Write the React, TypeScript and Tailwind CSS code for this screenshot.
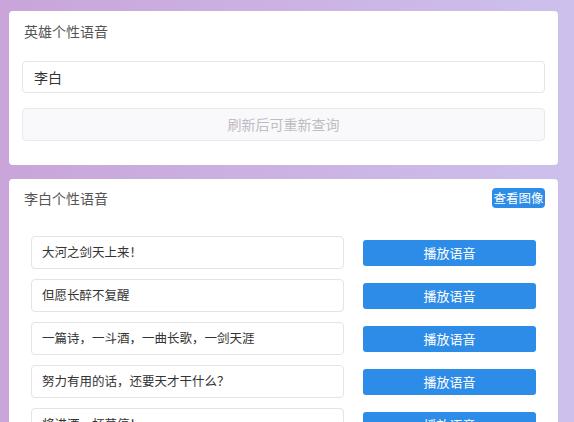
const lines = [
  "大河之剑天上来！",
  "但愿长醉不复醒",
  "一篇诗，一斗酒，一曲长歌，一剑天涯",
  "努力有用的话，还要天才干什么？",
  "将进酒，杯莫停！",
];

export default function App() {
  return (
    <div
      className="h-[422px] w-[574px] overflow-hidden bg-gradient-to-r from-[#c9a5d9] to-[#cdc0ec] pl-[9px] pr-[16px] pt-[11px]"
      style={{ fontFamily: '"Noto Sans CJK SC", "Noto Sans", sans-serif' }}
    >
      <div className="rounded-[4px] bg-white px-[13px] pb-[24px] pt-[10px]">
        <div className="ml-[2px] text-[14px] leading-[20px] text-[#555]">英雄个性语音</div>
        <div className="mt-[20px] flex h-[32px] items-center rounded-[4px] border border-[#e6e6e6] px-[11px] text-[14px] text-[#333]">
          李白
        </div>
        <button
          disabled
          className="mt-[15px] flex h-[33px] w-full items-center justify-center rounded-[4px] border border-[#ebe8ee] bg-[#f9f8fa] text-[14px] text-[#c0bcc4]"
        >
          刷新后可重新查询
        </button>
      </div>

      <div className="mt-[14px] h-[300px] rounded-[4px] bg-white">
        <div className="flex items-center justify-between px-[13px] pt-[9px]">
          <div className="ml-[2px] text-[14px] leading-[20px] text-[#555]">李白个性语音</div>
          <button className="flex h-[20px] w-[53px] items-center justify-center rounded-[4px] bg-[#2d8ce8] text-[12.5px] text-white">
            查看图像
          </button>
        </div>
        <div className="mt-[28px] flex flex-col gap-[10px] px-[22px]">
          {lines.map((t) => (
            <div key={t} className="flex items-center gap-[19px]">
              <div className="flex h-[33px] flex-1 items-center rounded-[4px] border border-[#e4e4e4] px-[10px] text-[12.5px] text-[#333]">
                {t}
              </div>
              <button className="h-[26px] w-[173px] rounded-[3px] bg-[#2d8ce8] text-[13px] text-white">
                播放语音
              </button>
            </div>
          ))}
        </div>
      </div>
    </div>
  );
}
